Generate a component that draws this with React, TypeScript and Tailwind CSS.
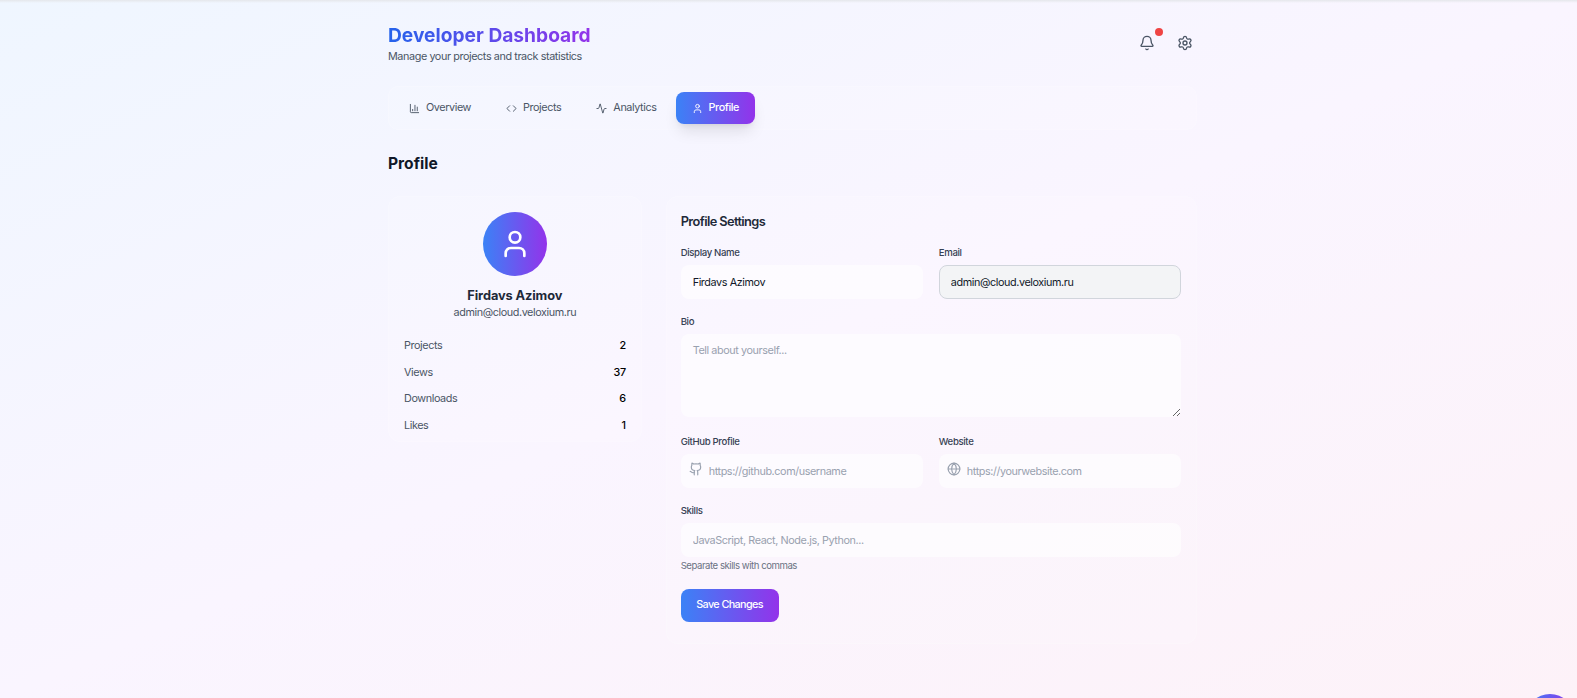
import React from "react";
import { Activity, BarChart3, Bell, Code, Github, Globe, Settings, User } from "lucide-react";

const tabs = [
  { label: "Overview", icon: BarChart3 },
  { label: "Projects", icon: Code },
  { label: "Analytics", icon: Activity },
  { label: "Profile", icon: User, active: true },
];

const stats = [
  { label: "Projects", value: 2 },
  { label: "Views", value: 37 },
  { label: "Downloads", value: 6 },
  { label: "Likes", value: 1 },
];

const brand = "bg-[linear-gradient(90deg,#3b82f6,#9333ea)]";
const small = "text-[10.8px] tracking-[-0.4px]";
const inputClass = `h-[34px] w-full rounded-[8px] bg-white/60 px-[12px] ${small} text-gray-900 outline-none placeholder:text-gray-400`;

const Label = ({ children }: { children: React.ReactNode }) => (
  <label className="mb-[6px] block h-[13px] text-[9.6px] font-medium leading-[13px] tracking-[-0.35px] text-gray-700">
    {children}
  </label>
);

export default function App() {
  return (
    <div className="h-[698px] overflow-hidden bg-[linear-gradient(to_bottom_right,#eff6ff,#faf5ff,#fdf2f8)] font-['Inter',sans-serif]">
      <div className="h-[3px] bg-gradient-to-b from-gray-200 to-transparent" />
      <div className="pl-[388px] pr-[380px] pt-[19px]">
        {/* header */}
        <div className="flex items-center justify-between">
          <div>
            <h1 className="inline-block bg-[linear-gradient(90deg,#2563eb,#9333ea)] bg-clip-text text-[19.2px] font-bold leading-[27px] text-transparent">
              Developer Dashboard
            </h1>
            <p className={`${small} leading-[16px] text-gray-600`}>Manage your projects and track statistics</p>
          </div>
          <div className="-mt-[2px] flex items-center gap-[22px] pr-[4px]">
            <button className="relative text-gray-600">
              <Bell size={16} />
              <span className="absolute -right-[8px] -top-[7px] h-[8px] w-[8px] rounded-full bg-[#ef4444]" />
            </button>
            <button className="text-gray-600">
              <Settings size={16} />
            </button>
          </div>
        </div>

        {/* tabs */}
        <div className="mt-[21px] flex gap-[3px] rounded-[10px] bg-white/10 p-[6px] pl-[5px] ring-1 ring-inset ring-white/20">
          {tabs.map((tab) => (
            <button
              key={tab.label}
              className={`flex h-[32px] items-center gap-[6px] rounded-[8px] px-[16px] ${small} ${
                tab.active ? `${brand} font-medium text-white shadow-lg` : "text-gray-600"
              }`}
            >
              <tab.icon size={11} />
              {tab.label}
            </button>
          ))}
        </div>

        <h2 className="mt-[23px] text-[15.6px] font-bold leading-[22px] text-gray-900">Profile</h2>

        <div className="mt-[21px] grid grid-cols-3 gap-6">
          {/* profile card */}
          <div className="h-[246px] rounded-[12px] bg-white/10 p-[16px] ring-1 ring-inset ring-white/20">
            <div className="flex flex-col items-center">
              <div className={`flex h-[64px] w-[64px] items-center justify-center rounded-full ${brand} text-white`}>
                <User size={32} />
              </div>
              <h3 className="mt-[11px] text-[12.8px] font-bold leading-[18px] tracking-[-0.1px] text-gray-800">
                Firdavs Azimov
              </h3>
              <p className={`${small} leading-[16px] text-gray-600`}>admin@cloud.veloxium.ru</p>
            </div>
            <div className="mt-[17px] flex flex-col gap-[10.6px]">
              {stats.map((s) => (
                <div key={s.label} className={`flex items-center justify-between ${small} leading-[16px]`}>
                  <span className="text-gray-600">{s.label}</span>
                  <span className="font-medium text-black">{s.value}</span>
                </div>
              ))}
            </div>
          </div>

          {/* settings form */}
          <div className="col-span-2 h-[448px] rounded-[12px] bg-white/10 pb-[16px] pl-[15px] pr-[16px] pt-[17px] ring-1 ring-inset ring-white/20">
            <h3 className="text-[12.8px] font-semibold leading-[18px] tracking-[-0.6px] text-gray-800">Profile Settings</h3>
            <div className="mt-[15px] grid grid-cols-2 gap-x-[16px]">
              <div>
                <Label>Display Name</Label>
                <input className={inputClass} defaultValue="Firdavs Azimov" />
              </div>
              <div>
                <Label>Email</Label>
                <input
                  className={`${inputClass} border border-gray-300 !bg-[#f3f4f6] !px-[11px]`}
                  defaultValue="admin@cloud.veloxium.ru"
                  disabled
                />
              </div>
            </div>

            <div className="mt-[16px]">
              <Label>Bio</Label>
              <textarea
                className={`block h-[83px] w-full rounded-[8px] bg-white/60 px-[12px] py-[9px] ${small} outline-none placeholder:text-gray-400`}
                placeholder="Tell about yourself..."
              />
            </div>

            <div className="mt-[18px] grid grid-cols-2 gap-x-[16px]">
              <div>
                <Label>GitHub Profile</Label>
                <div className="relative">
                  <Github size={14} className="absolute left-[8px] top-[8px] text-gray-400" />
                  <input className={`${inputClass} !pl-[28px]`} placeholder="https://github.com/username" />
                </div>
              </div>
              <div>
                <Label>Website</Label>
                <div className="relative">
                  <Globe size={14} className="absolute left-[8px] top-[8px] text-gray-400" />
                  <input className={`${inputClass} !pl-[28px]`} placeholder="https://yourwebsite.com" />
                </div>
              </div>
            </div>

            <div className="mt-[16px]">
              <Label>Skills</Label>
              <input className={inputClass} placeholder="JavaScript, React, Node.js, Python..." />
              <p className="mt-[2px] text-[9.6px] leading-[13px] tracking-[-0.46px] text-gray-500">Separate skills with commas</p>
            </div>

            <button
              className={`mt-[17px] h-[33px] w-[98px] rounded-[8px] ${brand} text-[10.8px] font-medium tracking-[-0.6px] text-white`}
            >
              Save Changes
            </button>
          </div>
        </div>
      </div>

      {/* floating chat button, mostly below the fold */}
      <div className={`fixed left-[1526px] top-[694px] h-[48px] w-[48px] rounded-full ${brand}`} />
    </div>
  );
}
